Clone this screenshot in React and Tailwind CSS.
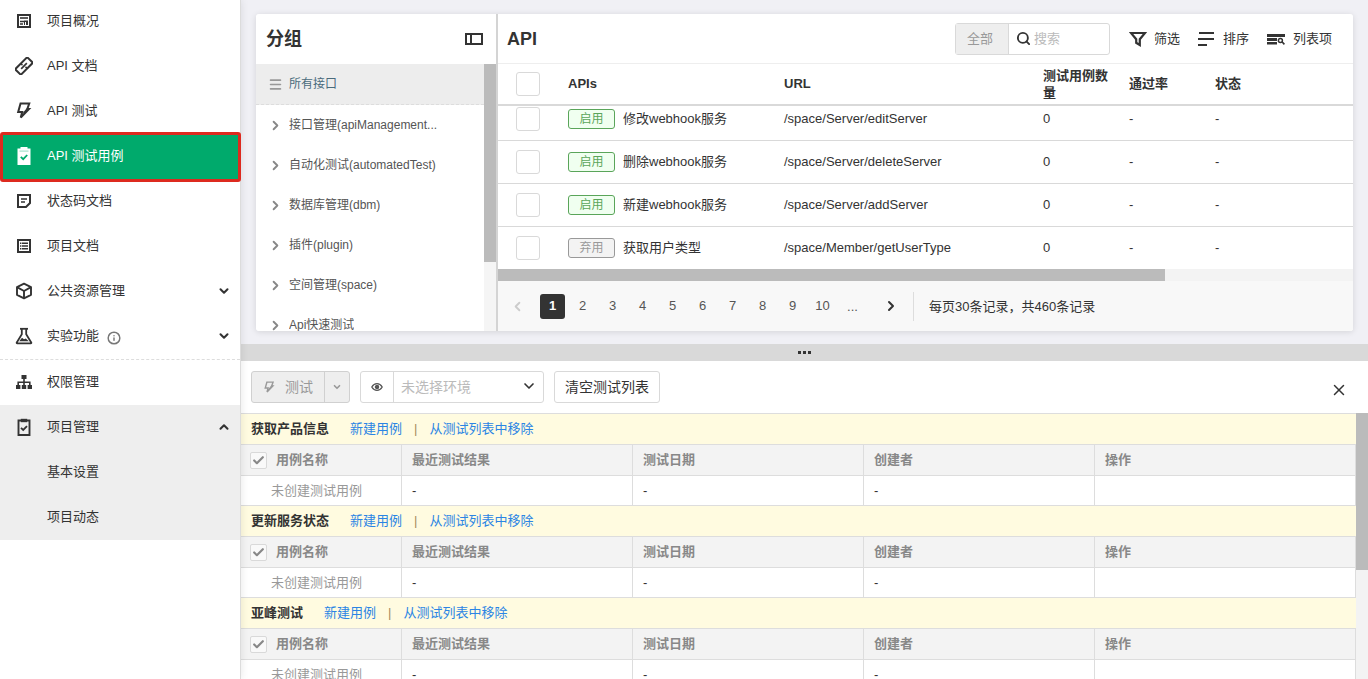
import { useState } from 'react';
import { Check, ChevronDown, ChevronLeft, ChevronRight, ChevronUp, Info, Menu, Search, X } from 'lucide-react';

const OverviewIcon = () => (
  <svg viewBox="0 0 16 16" className="size-4" fill="none" stroke="currentColor" strokeWidth="2">
    <path d="M2 2h12v12H2z" />
    <path d="M4 5h8" strokeWidth="1.6" />
    <path d="M4 8.5h4M4 11h3" strokeWidth="1.3" />
    <path d="M8 7.500h4V12H8z" fill="currentColor" stroke="none" />
    <path d="M9.500 9v3" stroke="#fff" strokeWidth="1" />
  </svg>
);

const LinkIcon = () => (
  <svg viewBox="0 0 18 18" className="size-[18px]" fill="none" stroke="currentColor" strokeWidth="2.1">
    <g transform="rotate(-45 9 9)">
      <rect x="0.5" y="5" width="17" height="8" rx="1" />
      <path d="M5 9h8" strokeWidth="1.7" />
      <path d="M8.500 5.200v2.200M9.500 10.600v2.200" strokeWidth="1.500" />
    </g>
  </svg>
);

const BoltIcon = ({ className = 'size-[17px]' }) => (
  <svg viewBox="0 0 16 16" className={className} fill="none" stroke="currentColor" strokeWidth="1.9">
    <path d="M5.200 1.500h8.200l-1.800 5h1.600L5.400 14.700l1.400-5.300H3z" />
    <path d="M11.600 6.500L8 10.800" strokeWidth="1.600" />
  </svg>
);

const ClipboardSolidIcon = () => (
  <svg viewBox="0 0 16 18" className="h-[18px] w-4">
    <path d="M1.500 1.500H4.500V0h7v1.500h3V18h-13z" fill="currentColor" />
    <path d="M3.500 3.500h9v1.200h-9z" fill="#00aa6c" opacity=".35" />
    <path d="M4.800 9.800l2.400 2.400 4-4.200" fill="none" stroke="#00aa6c" strokeWidth="1.8" />
  </svg>
);

const ClipboardIcon = () => (
  <svg viewBox="0 0 16 18" className="h-[18px] w-4" fill="none" stroke="currentColor">
    <path d="M2.500 2.500h11V17h-11z" strokeWidth="1.9" />
    <path d="M4.800.8h6.400v3.400H4.800z" fill="currentColor" stroke="none" />
    <path d="M5 9.800l2.200 2.100 3.800-3.800" strokeWidth="1.8" />
  </svg>
);

const NoteIcon = () => (
  <svg viewBox="0 0 16 16" className="size-4" fill="none" stroke="currentColor" strokeWidth="2">
    <path d="M2 2h12v8l-4 4H2z" />
    <path d="M5 6h6M5 9h4" strokeWidth="1.6" />
  </svg>
);

const DocIcon = () => (
  <svg viewBox="0 0 16 16" className="size-4" fill="none" stroke="currentColor" strokeWidth="2">
    <path d="M2 2h12v12H2z" />
    <path d="M4 5.200h1.400M6 5.200h6M4 8h1.400M6 8h6M4 10.800h1.400M6 10.800h6" strokeWidth="1.6" />
  </svg>
);

const CubeIcon = () => (
  <svg viewBox="0 0 18 18" className="size-[18px]" fill="none" stroke="currentColor" strokeWidth="1.9" strokeLinejoin="round">
    <path d="M9 1.600l7 3.600v7.600l-7 3.600-7-3.600V5.200z" />
    <path d="M2 5.200l7 3.800 7-3.800M9 9v7.400" />
  </svg>
);

const FlaskIcon = () => (
  <svg viewBox="0 0 18 18" className="size-[18px]" fill="none" stroke="currentColor" strokeWidth="1.8">
    <path d="M5 1.800h8" />
    <path d="M6.800 2v5.200L1.800 15.400a.6.6 0 0 0 .5 1h13.400a.6.6 0 0 0 .5-1L11.200 7.200V2" />
    <path d="M4.200 14.200l2.800-3.400 2 1.400 1.800-.8 3 2.800z" fill="currentColor" stroke="none" />
  </svg>
);

const TreeIcon = () => (
  <svg viewBox="0 0 18 16" className="h-4 w-[18px]" fill="currentColor">
    <path d="M6.500 1h5v4h-5zM1 11h4.400v4H1zM6.800 11h4.400v4H6.800zM12.600 11H17v4h-4.400z" />
    <path d="M9 4v8M3.200 12V8.200h11.600V12" fill="none" stroke="currentColor" strokeWidth="1.6" />
  </svg>
);

const PanelIcon = () => (
  <svg viewBox="0 0 20 14" className="h-3.5 w-5" fill="none" stroke="currentColor" strokeWidth="2">
    <path d="M2 2h16v10H2z" />
    <path d="M7 2v10" />
  </svg>
);

const FunnelIcon = () => (
  <svg viewBox="0 0 18 16" className="h-4 w-[18px]" fill="none" stroke="currentColor" strokeWidth="2.2">
    <path d="M2 2h14L10.800 8.200V14L7.200 11.800V8.200z" />
  </svg>
);

const SortIcon = () => (
  <svg viewBox="0 0 18 16" className="h-4 w-[18px]" fill="none" stroke="currentColor" strokeWidth="2">
    <path d="M2 2h15M1 8h16M1 14h9" />
  </svg>
);

const ColumnsIcon = () => (
  <svg viewBox="0 0 18 12" className="h-3 w-[18px]" fill="currentColor">
    <path d="M0 1h18v3H0zM0 5h10v3H0zM0 9h10v2.500H0z" />
    <circle cx="13.400" cy="7.400" r="2" fill="none" stroke="currentColor" strokeWidth="1.5" />
    <path d="M15 8.800l2.400 2.600" stroke="currentColor" strokeWidth="1.6" />
  </svg>
);

const EyeIcon = () => (
  <svg viewBox="0 0 12 10" className="h-2.5 w-3" fill="none" stroke="currentColor" strokeWidth="1.3">
    <path d="M.8 5C2.200 2.600 4 1.600 6 1.600S9.800 2.600 11.200 5C9.800 7.400 8 8.400 6 8.400S2.200 7.400.8 5z" />
    <circle cx="6" cy="5" r="1.6" fill="currentColor" />
  </svg>
);

const menu = [
  { label: '项目概况', icon: OverviewIcon },
  { label: 'API 文档', icon: LinkIcon },
  { label: 'API 测试', icon: BoltIcon },
  { label: 'API 测试用例', icon: ClipboardSolidIcon, active: true },
  { label: '状态码文档', icon: NoteIcon },
  { label: '项目文档', icon: DocIcon },
  { label: '公共资源管理', icon: CubeIcon, arrow: 'down' },
  { label: '实验功能', icon: FlaskIcon, arrow: 'down', info: true },
];

const groups = [
  '接口管理(apiManagement...',
  '自动化测试(automatedTest)',
  '数据库管理(dbm)',
  '插件(plugin)',
  '空间管理(space)',
  'Api快速测试',
];

const apis = [
  { name: '修改webhook服务', url: '/space/Server/editServer', enabled: true },
  { name: '删除webhook服务', url: '/space/Server/deleteServer', enabled: true },
  { name: '新建webhook服务', url: '/space/Server/addServer', enabled: true },
  { name: '获取用户类型', url: '/space/Member/getUserType', enabled: false },
];

const testGroups = ['获取产品信息', '更新服务状态', '亚峰测试'];

function MenuItem({ label, icon: Icon, active, arrow, info }) {
  return (
    <a href="#" className={`relative flex h-[45px] items-center pr-[9px] pb-0.5 ${active ? 'text-white' : ''}`}>
      {active && <span className="absolute -inset-x-px -top-0.5 -bottom-[3px] z-10 ml-px rounded-[3px] border-3 border-[#dd2a1f] bg-[#00aa6c]" />}
      <span className="z-10 flex w-[47px] justify-center">{Icon && <Icon />}</span>
      <span className="z-10">{label}</span>
      {info && <Info className="mt-1 ml-2 size-3.5 text-[#777]" strokeWidth={2.5} />}
      {arrow === 'down' && <ChevronDown className="ml-auto size-3.5" strokeWidth={3.5} />}
      {arrow === 'up' && <ChevronUp className="ml-auto size-3.5" strokeWidth={3.5} />}
    </a>
  );
}

function Sidebar() {
  return (
    <aside className="z-20 w-[241px] shrink-0 border-r border-[#dcdcdc] bg-white text-[13px] text-[#333] shadow-[0_0_8px_rgba(0,0,0,0.1)]">
      <nav className="-mt-px">
        <div className="border-b border-dashed border-[#ddd]">
          {menu.map(item => (
            <MenuItem key={item.label} {...item} />
          ))}
        </div>
        <MenuItem label="权限管理" icon={TreeIcon} />
        <div className="bg-[#eee]">
          <MenuItem label="项目管理" icon={ClipboardIcon} arrow="up" />
          <MenuItem label="基本设置" />
          <MenuItem label="项目动态" />
        </div>
      </nav>
    </aside>
  );
}

function GroupPanel() {
  return (
    <section className="flex w-[242px] shrink-0 flex-col border-r-2 border-[#d4d4d4] bg-white">
      <header className="flex h-[50px] shrink-0 items-center justify-between pr-3 pl-2.5">
        <h2 className="text-lg font-bold text-[#333]">分组</h2>
        <button aria-label="收起分组" className="text-[#333]"><PanelIcon /></button>
      </header>
      <div className="flex min-h-0 flex-1 overflow-hidden">
        <ul className="min-w-0 flex-1 text-xs text-[#555]">
          <li className="flex h-[41px] items-center border-b border-dashed border-[#ddd] bg-[#ededed] pl-3 text-[#4a6b7c]">
            <Menu className="mr-1.5 size-[15px] text-[#999]" strokeWidth={2.5} />
            所有接口
          </li>
          {groups.map(group => (
            <li key={group} className="flex h-10 items-center pl-3">
              <ChevronRight className="mr-1.5 size-[15px] shrink-0 text-[#888]" strokeWidth={3} />
              <span className="truncate">{group}</span>
            </li>
          ))}
        </ul>
        <div className="w-3 bg-[#f5f5f5]">
          <div className="h-[74%] bg-[#bbb]" />
        </div>
      </div>
    </section>
  );
}

function Columns() {
  return (
    <colgroup>
      <col className="w-15" />
      <col className="w-[216px]" />
      <col className="w-[259px]" />
      <col className="w-[86px]" />
      <col className="w-[86px]" />
      <col />
    </colgroup>
  );
}

function RowCheckbox({ label }) {
  return (
    <input
      type="checkbox"
      aria-label={label}
      className="block size-6 appearance-none rounded-[3px] border border-[#d9d9d9] bg-white"
    />
  );
}

function ApiTable() {
  return (
    <div className="flex min-h-0 flex-1 flex-col text-[13px] text-[#333]">
      <table className="w-full shrink-0 table-fixed border-t border-b-2 border-t-[#eee] border-b-[#d9d9d9] text-left">
        <Columns />
        <thead>
          <tr className="h-[41px] leading-[17px]">
            <th className="pl-[18px]"><RowCheckbox label="全选" /></th>
            <th className="px-2.5 font-bold">APIs</th>
            <th className="px-2.5 font-bold">URL</th>
            <th className="px-2.5 font-bold">测试用例数量</th>
            <th className="px-2.5 font-bold">通过率</th>
            <th className="px-2.5 font-bold">状态</th>
          </tr>
        </thead>
      </table>
      <div className="min-h-0 flex-1 overflow-hidden">
        <table className="-mt-2 w-full table-fixed">
          <Columns />
          <tbody>
            {apis.map(api => (
              <tr key={api.name} className="h-[43px] border-b border-[#d9d9d9]">
                <td className="pl-[18px]"><RowCheckbox label={api.name} /></td>
                <td className="px-2.5">
                  <div className="flex items-center gap-2">
                    <span
                      className={`w-[47px] rounded-[3px] border text-center text-xs leading-[18px] ${
                        api.enabled
                          ? 'border-[#5aa55a] bg-[#f0fff0] text-[#5aa55a]'
                          : 'border-[#999] bg-[#f3f3f3] text-[#999]'
                      }`}
                    >
                      {api.enabled ? '启用' : '弃用'}
                    </span>
                    <span>{api.name}</span>
                  </div>
                </td>
                <td className="px-2.5">{api.url}</td>
                <td className="px-2.5">0</td>
                <td className="px-2.5">-</td>
                <td className="px-2.5">-</td>
              </tr>
            ))}
          </tbody>
        </table>
      </div>
      <div className="h-3 shrink-0 bg-[#f3f3f3]">
        <div className="h-full w-[78%] bg-[#bbb]" />
      </div>
    </div>
  );
}

function Pager() {
  const [page, setPage] = useState(1);

  return (
    <footer className="flex h-[50px] shrink-0 items-center bg-[#f8f8f8] pl-3 text-[13px] text-[#555]">
      <button aria-label="上一页" disabled className="mr-[15px] text-[#ccc]">
        <ChevronLeft className="size-[15px]" strokeWidth={3} />
      </button>
      <div className="flex gap-[5px]">
        {[1, 2, 3, 4, 5, 6, 7, 8, 9, 10].map(n => (
          <button
            key={n}
            onClick={() => setPage(n)}
            className={`size-[25px] rounded-[3px] ${n === page ? 'bg-[#333] font-bold text-white' : ''}`}
          >
            {n}
          </button>
        ))}
        <span className="w-[25px] text-center leading-[25px]">...</span>
      </div>
      <button aria-label="下一页" className="ml-[18px] text-[#333]">
        <ChevronRight className="size-4" strokeWidth={3} />
      </button>
      <span className="ml-3.5 h-[29px] border-l border-[#ddd] pl-[15px] leading-[29px] text-[#333]">每页30条记录，共460条记录</span>
    </footer>
  );
}

function ApiPanel() {
  return (
    <section className="flex min-w-0 flex-1 flex-col bg-white">
      <header className="flex h-[49px] shrink-0 items-center pr-[21px] pl-[9px] text-[13px] text-[#333]">
        <h2 className="text-lg font-bold">API</h2>
        <div className="ml-auto flex h-8 w-[155px] items-stretch rounded-[3px] border border-[#d9d9d9]">
          <button className="w-[53px] shrink-0 border-r border-[#d9d9d9] bg-[#eee] pr-1 text-[#999]">全部</button>
          <label className="flex min-w-0 items-center gap-[3px] pl-[7px]">
            <Search className="size-[15px] shrink-0" strokeWidth={3} />
            <input placeholder="搜索" aria-label="搜索" className="w-full min-w-0 outline-none placeholder:text-[#bbb]" />
          </label>
        </div>
        <button className="ml-[19px] flex items-center gap-[7px]"><FunnelIcon />筛选</button>
        <button className="ml-[17px] flex items-center gap-2"><SortIcon />排序</button>
        <button className="ml-[18px] flex items-center gap-2"><ColumnsIcon />列表项</button>
      </header>
      <ApiTable />
      <Pager />
    </section>
  );
}

function TestToolbar() {
  return (
    <div className="flex h-[52px] shrink-0 items-center gap-2.5 px-2.5 text-[13px] text-[#333]">
      <div className="flex h-8 rounded-[3px] border border-[#d0d0d0] bg-[#eee] text-sm text-[#999]">
        <button className="flex w-[73px] items-center justify-center gap-2.5 border-r border-[#d0d0d0]">
          <BoltIcon className="size-3" />
          测试
        </button>
        <button aria-label="更多测试选项" className="flex w-6 items-center justify-center">
          <ChevronDown className="size-2.5" strokeWidth={4} />
        </button>
      </div>
      <div className="relative flex h-8 w-[184px] rounded-[3px] border border-[#d9d9d9]">
        <button aria-label="查看环境" className="flex w-[33px] shrink-0 items-center justify-center border-r border-[#d9d9d9] text-[#555]">
          <EyeIcon />
        </button>
        <select aria-label="环境" className="w-full appearance-none px-[7px] text-sm text-[#bbb] outline-none">
          <option>未选择环境</option>
        </select>
        <ChevronDown className="pointer-events-none absolute top-1.5 right-1.5 size-4" strokeWidth={2.5} />
      </div>
      <button className="h-8 rounded-[3px] border border-[#d9d9d9] px-2.5 text-sm">清空测试列表</button>
      <button aria-label="关闭" className="mt-1.5 ml-auto pr-2.5">
        <X className="size-[18px]" strokeWidth={2} />
      </button>
    </div>
  );
}

function TestGroup({ name }) {
  return (
    <div className="text-[13px]">
      <div className="flex h-8 items-center border-y border-[#ddd] bg-[#fffbe0] pl-2.5 text-[#333]">
        <strong className="mr-[21px]">{name}</strong>
        <a href="#" className="text-[#2b85e4]">新建用例</a>
        <span className="mx-3 text-[#a98b5d]">|</span>
        <a href="#" className="text-[#2b85e4]">从测试列表中移除</a>
      </div>
      <table className="w-full table-fixed border-separate border-spacing-0 text-left">
        <colgroup>
          <col className="w-[161px]" />
          <col className="w-[231px]" />
          <col className="w-[231px]" />
          <col className="w-[231px]" />
          <col />
        </colgroup>
        <thead className="bg-[#f3f3f3] text-[#888]">
          <tr className="h-[31px]">
            <th className="border-r border-b border-[#ddd] px-[9px]">
              <label className="flex items-center gap-[9px]">
                <span className="relative">
                  <input type="checkbox" defaultChecked disabled className="block size-[17px] appearance-none rounded-[2px] border border-[#d9d9d9] bg-[#f9f9f9]" />
                  <Check className="absolute top-0.5 left-0.5 size-[13px]" strokeWidth={4} />
                </span>
                用例名称
              </label>
            </th>
            <th className="border-r border-b border-[#ddd] px-2.5">最近测试结果</th>
            <th className="border-r border-b border-[#ddd] px-2.5">测试日期</th>
            <th className="border-r border-b border-[#ddd] px-2.5">创建者</th>
            <th className="border-r border-b border-[#ddd] px-2.5">操作</th>
          </tr>
        </thead>
        <tbody>
          <tr className="h-[29px] text-[#333]">
            <td className="border-r border-[#ddd] pl-[30px] text-[#999]">未创建测试用例</td>
            <td className="border-r border-[#ddd] px-2.5">-</td>
            <td className="border-r border-[#ddd] px-2.5">-</td>
            <td className="border-r border-[#ddd] px-2.5">-</td>
            <td className="border-r border-[#ddd] px-2.5"></td>
          </tr>
        </tbody>
      </table>
    </div>
  );
}

export default function App() {
  return (
    <div className="flex h-screen overflow-hidden bg-[#f0f0f5] font-['Liberation_Sans','Noto_Sans_CJK_SC',sans-serif]">
      <Sidebar />
      <main className="flex min-w-0 flex-1 flex-col">
        <div className="flex min-h-0 flex-[344_1_0%] flex-col">
          <div className="flex min-h-0 flex-1 px-[15px] pt-3.5 pb-[13px]">
            <div className="flex min-w-0 flex-1 overflow-hidden rounded-[3px] shadow-[0_1px_6px_rgba(0,0,0,0.12)]">
              <GroupPanel />
              <ApiPanel />
            </div>
          </div>
        </div>
        <div className="flex h-[17px] shrink-0 items-center justify-center gap-[2px] bg-[#d9d9d9]">
          <span className="h-[3px] w-[3px] bg-[#333]" />
          <span className="h-[3px] w-[3px] bg-[#333]" />
          <span className="h-[3px] w-[3px] bg-[#333]" />
        </div>
        <div className="flex min-h-0 flex-[318_1_0%] flex-col bg-white">
          <TestToolbar />
          <div className="flex min-h-0 flex-1 overflow-hidden">
            <div className="min-w-0 flex-1">
              {testGroups.map(name => (
                <TestGroup key={name} name={name} />
              ))}
            </div>
            <div className="w-3 bg-[#f3f3f3]">
              <div className="h-[59%] bg-[#bbb]" />
            </div>
          </div>
        </div>
      </main>
    </div>
  );
}
